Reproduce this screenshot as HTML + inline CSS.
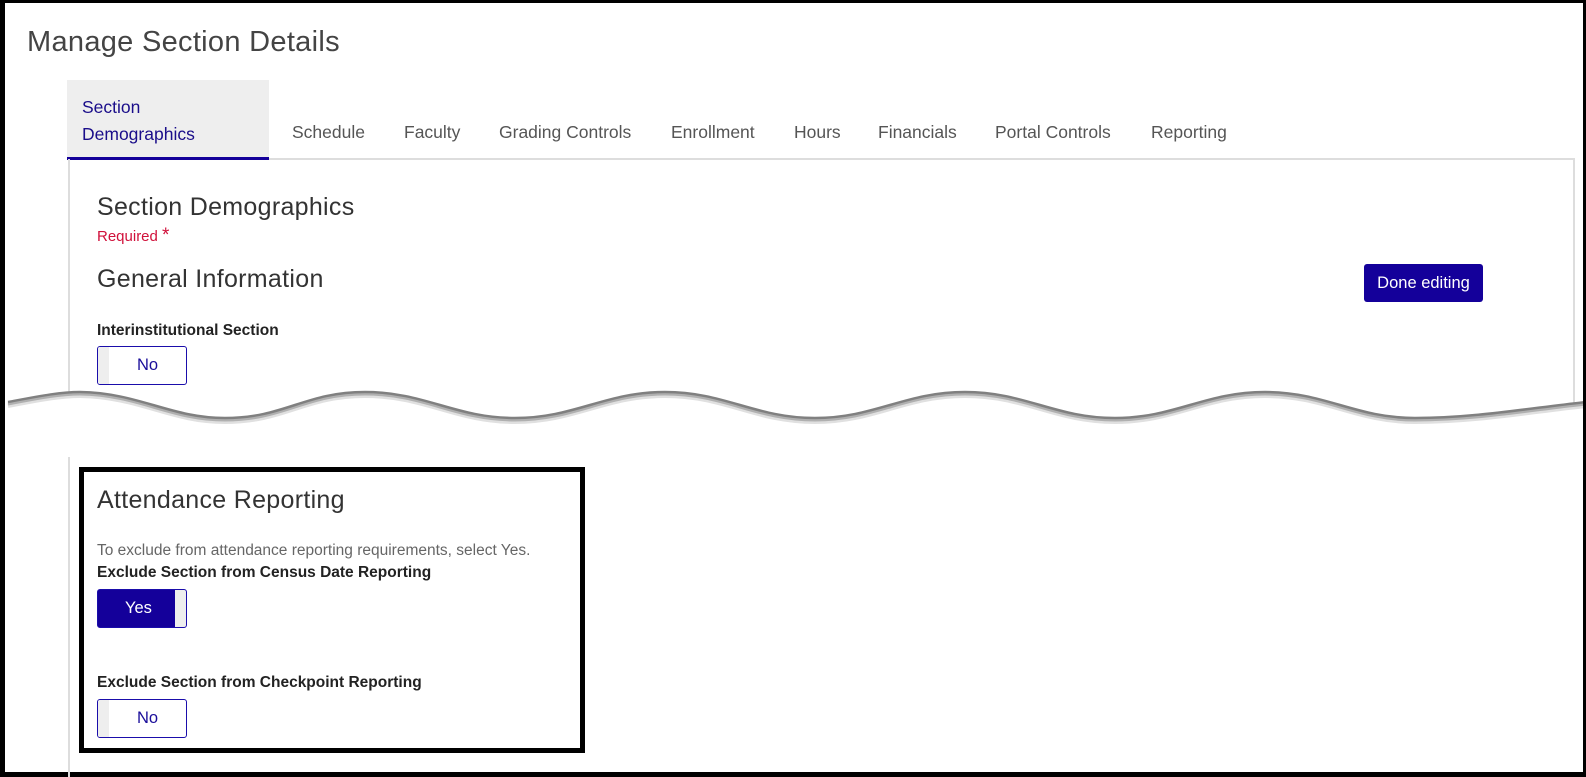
<!DOCTYPE html>
<html><head><style>
*{margin:0;padding:0;box-sizing:border-box}
body{width:1586px;height:777px;position:relative;background:#fff;font-family:"Liberation Sans",Arial,sans-serif;overflow:hidden}
.a{position:absolute;white-space:nowrap}
.h{color:#333;font-weight:normal;letter-spacing:0.3px;font-size:25px}
.tab{position:absolute;top:122px;font-size:17.5px;color:#555}
.lbl{font-size:15.5px;font-weight:bold;color:#222}
.tog{position:absolute;width:90px;height:39px;border:1px solid #1a0dab;border-radius:3px;background:#fff;overflow:hidden}
.tog .k{position:absolute;top:0;bottom:0;width:11px;background:#eee}
.tog span{position:absolute;top:0;line-height:37px;font-size:16.5px;color:#1a0d9a}
</style></head><body>
<div class="a" style="left:0;top:0;width:1586px;height:777px;border:3px solid #000;border-left-width:5px;border-bottom-width:5px"></div>
<div class="a h" style="left:27px;top:26px;font-size:29px;color:#444">Manage Section Details</div>
<div class="a" style="left:67px;top:80px;width:202px;height:80px;background:#eee;border-bottom:3px solid #14009a"></div>
<div class="a" style="left:82px;top:94px;font-size:17.5px;line-height:27px;color:#1a0d8a">Section<br>Demographics</div>
<div class="tab" style="left:292px">Schedule</div>
<div class="tab" style="left:404px">Faculty</div>
<div class="tab" style="left:499px">Grading Controls</div>
<div class="tab" style="left:671px">Enrollment</div>
<div class="tab" style="left:794px">Hours</div>
<div class="tab" style="left:878px">Financials</div>
<div class="tab" style="left:995px">Portal Controls</div>
<div class="tab" style="left:1151px">Reporting</div>
<div class="a" style="left:269px;top:158px;width:1306px;height:2px;background:#ddd"></div>
<div class="a" style="left:68px;top:159px;width:1507px;height:265px;border:2px solid #ddd;border-top:none"></div>
<div class="a h" style="left:97px;top:193px">Section Demographics</div>
<div class="a" style="left:97px;top:225px;font-size:15px;color:#d0103a">Required <span style="font-size:19px">*</span></div>
<div class="a h" style="left:97px;top:265px">General Information</div>
<div class="a" style="left:1364px;top:264px;width:119px;height:38px;background:#14009a;border-radius:3px;color:#fff;font-size:16.5px;line-height:38px;text-align:center">Done editing</div>
<div class="a lbl" style="left:97px;top:322px">Interinstitutional Section</div>
<div class="tog" style="left:97px;top:346px"><div class="k" style="left:0"></div><span style="left:39px">No</span></div>
<svg class="a" style="left:5px;top:378px" width="1578" height="90" viewBox="5 0 1578 90">
<path d="M0,23 C40,17 60,13 80,13 C140,14 170,39 225,39 C285,39 305,13 365,13 C425,13 455,39 515,39 C575,39 605,13 665,13 C725,13 755,39 815,39 C875,39 905,13 965,13 C1025,13 1055,39 1115,39 C1175,39 1205,13 1265,13 C1325,13 1355,39 1415,39 C1475,39 1530,29 1586,23 L1586,90 L0,90 Z" fill="#fff"/>
<g fill="none">
<path transform="translate(0,5)" stroke="#e0e0e0" stroke-width="4" d="M8,23 C40,17 60,13 80,13 C140,14 170,39 225,39 C285,39 305,13 365,13 C425,13 455,39 515,39 C575,39 605,13 665,13 C725,13 755,39 815,39 C875,39 905,13 965,13 C1025,13 1055,39 1115,39 C1175,39 1205,13 1265,13 C1325,13 1355,39 1415,39 C1475,39 1530,29 1586,23"/>
<path transform="translate(0,3)" stroke="#b0b0b0" stroke-width="3" d="M8,23 C40,17 60,13 80,13 C140,14 170,39 225,39 C285,39 305,13 365,13 C425,13 455,39 515,39 C575,39 605,13 665,13 C725,13 755,39 815,39 C875,39 905,13 965,13 C1025,13 1055,39 1115,39 C1175,39 1205,13 1265,13 C1325,13 1355,39 1415,39 C1475,39 1530,29 1586,23"/>
<path transform="translate(0,1)" stroke="#808080" stroke-width="2.5" d="M8,23 C40,17 60,13 80,13 C140,14 170,39 225,39 C285,39 305,13 365,13 C425,13 455,39 515,39 C575,39 605,13 665,13 C725,13 755,39 815,39 C875,39 905,13 965,13 C1025,13 1055,39 1115,39 C1175,39 1205,13 1265,13 C1325,13 1355,39 1415,39 C1475,39 1530,29 1586,23"/>
</g>
</svg>
<div class="a" style="left:68px;top:457px;width:2px;height:320px;background:#ddd"></div>
<div class="a" style="left:79px;top:467px;width:506px;height:286px;border:5px solid #000"></div>
<div class="a h" style="left:97px;top:486px">Attendance Reporting</div>
<div class="a" style="left:97px;top:542px;font-size:15.5px;color:#666">To exclude from attendance reporting requirements, select Yes.</div>
<div class="a lbl" style="left:97px;top:564px">Exclude Section from Census Date Reporting</div>
<div class="tog" style="left:97px;top:589px;background:#14009a"><div class="k" style="right:0"></div><span style="left:27px;color:#fff">Yes</span></div>
<div class="a lbl" style="left:97px;top:674px">Exclude Section from Checkpoint Reporting</div>
<div class="tog" style="left:97px;top:699px"><div class="k" style="left:0"></div><span style="left:39px">No</span></div>
</body></html>
